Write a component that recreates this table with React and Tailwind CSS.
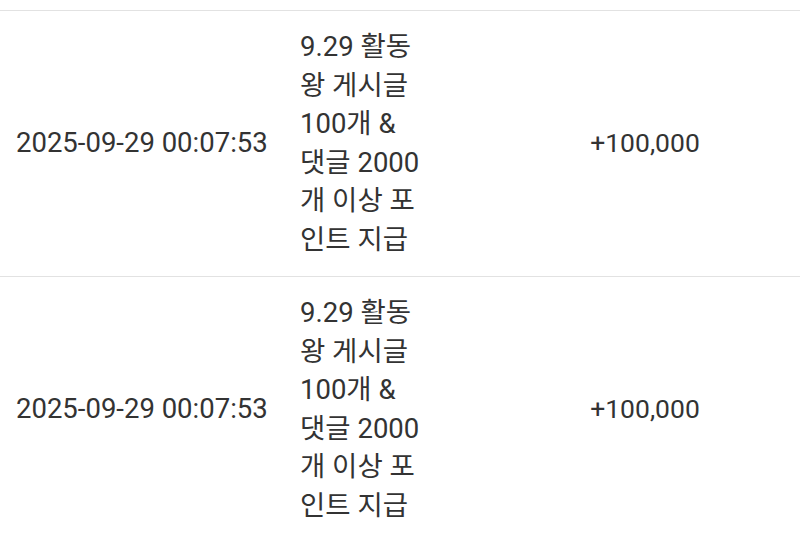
const rows = [
  {
    date: '2025-09-29 00:07:53',
    desc: '9.29 활동왕 게시글 100개 & 댓글 2000개 이상 포인트 지급',
    amount: '+100,000',
  },
  {
    date: '2025-09-29 00:07:53',
    desc: '9.29 활동왕 게시글 100개 & 댓글 2000개 이상 포인트 지급',
    amount: '+100,000',
  },
];

export default function App() {
  return (
    <div
      className="min-h-screen bg-white text-[#333333] pt-[10px]"
      style={{ fontFamily: 'Roboto, "Noto Sans CJK KR", sans-serif' }}
    >
      {rows.map((row, i) => (
        <div
          key={i}
          className="grid grid-cols-[284px_206px_1fr] items-center border-t border-[#e2e2e2] py-[17px] text-[27.5px] leading-[38.5px]"
        >
          <div className="pl-4">{row.date}</div>
          <div className="px-4">
            <div className="w-[126px]">{row.desc}</div>
          </div>
          <div className="text-center text-[26.5px]">{row.amount}</div>
        </div>
      ))}
    </div>
  );
}
